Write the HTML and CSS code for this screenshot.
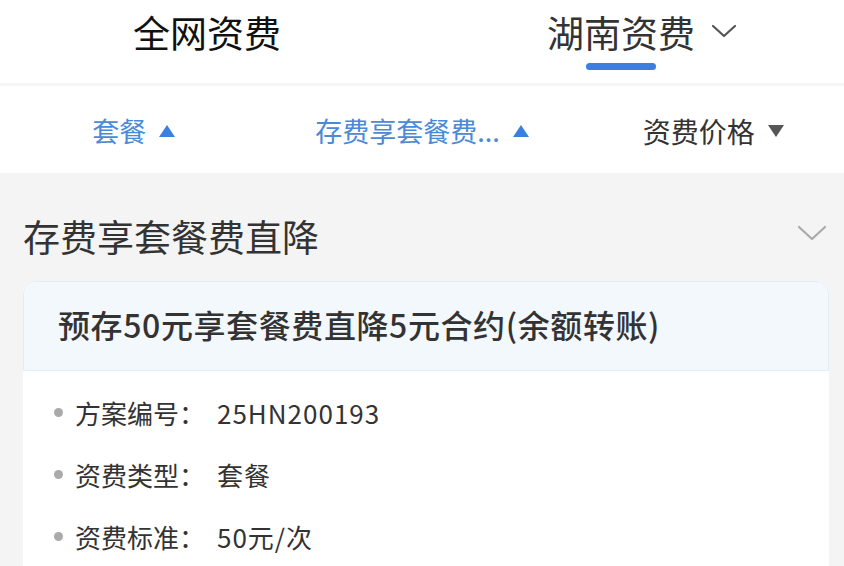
FILE: index.html
```html
<!DOCTYPE html>
<html lang="zh-CN">
<head>
    <meta charset="UTF-8">
    <meta name="viewport" content="width=device-width, initial-scale=1.0">
    <title>资费公示</title>
    <link rel="stylesheet" href="styles.css">
</head>
<body>
    <!-- 顶部切换：全网 / 湖南 -->
    <div class="tabs">
        <div class="tab">
            <span class="tab-label">全网资费</span>
        </div>
        <div class="tab tab-active">
            <span class="tab-label">
                湖南资费
                <svg class="tab-arrow" viewBox="0 0 26 16" width="26" height="16">
                    <polyline points="2,3 13,13 24,3" fill="none" stroke="#555" stroke-width="2.2" stroke-linecap="round" stroke-linejoin="round"/>
                </svg>
            </span>
            <span class="tab-line"></span>
        </div>
    </div>

    <!-- 筛选条 -->
    <div class="filters">
        <div class="filter filter-on">套餐<i class="tri tri-up"></i></div>
        <div class="filter filter-on">存费享套餐费...<i class="tri tri-up"></i></div>
        <div class="filter">资费价格<i class="tri tri-down"></i></div>
    </div>

    <div class="content">
        <div class="group-head">
            <h2>存费享套餐费直降</h2>
            <svg class="group-arrow" viewBox="0 0 30 18" width="30" height="18">
                <polyline points="2,3 15,15 28,3" fill="none" stroke="#aaa" stroke-width="2.2" stroke-linecap="round" stroke-linejoin="round"/>
            </svg>
        </div>

        <div class="card">
            <div class="card-title">预存50元享套餐费直降5元合约(余额转账)</div>
            <ul class="card-body">
                <li><span class="key">方案编号：</span>25HN200193</li>
                <li><span class="key">资费类型：</span>套餐</li>
                <li><span class="key">资费标准：</span>50元/次</li>
            </ul>
        </div>
    </div>
</body>
</html>
```

FILE: styles.css
```css
body {
    font-family: "Noto Sans CJK SC", "Noto Sans", sans-serif;
    margin: 0;
    padding: 0;
    background-color: #f4f4f4;
    color: #333;
    overflow: hidden;
}

.tabs {
    display: grid;
    grid-template-columns: 1fr 1fr;
    background: #fff;
    height: 83px;
    border-bottom: 3px solid #f6f6f6;
}

.tab {
    display: flex;
    flex-direction: column;
    align-items: center;
    padding-top: 9px;
    padding-right: 8px;
}

.tab-active {
    padding-right: 24px;
}

.tab-label {
    position: relative;
    font-size: 37px;
    line-height: 46px;
    color: #111;
}

.tab-active .tab-label {
    color: #333;
}

.tab-arrow {
    position: absolute;
    left: 100%;
    top: 14px;
    margin-left: 16px;
}

.tab-line {
    width: 70px;
    height: 7px;
    margin-top: 8px;
    border-radius: 4px;
    background: #3b7fe0;
}

.filters {
    display: grid;
    grid-template-columns: 1fr 1fr 1fr;
    height: 87px;
    background: #fff;
    align-items: center;
}

.filter {
    display: flex;
    align-items: center;
    justify-content: center;
    gap: 13px;
    font-size: 27px;
    color: #333;
    padding-top: 2px;
}

.filter:first-child {
    padding-right: 14px;
}

.filter:last-child {
    padding-left: 20px;
    font-size: 28px;
}

.filter-on {
    color: #4a8ad6;
}

.tri {
    width: 0;
    height: 0;
    border-left: 8px solid transparent;
    border-right: 8px solid transparent;
}

.tri-up {
    border-bottom: 12px solid #3b7fe0;
}

.tri-down {
    border-top: 12px solid #555;
}

.content {
    padding: 0 15px 0 23px;
}

.group-head {
    display: flex;
    align-items: center;
    justify-content: space-between;
    padding: 38px 2px 20px 0;
}

.group-head h2 {
    margin: 0;
    font-size: 37px;
    font-weight: normal;
    line-height: 50px;
    color: #333;
}

.group-arrow {
    margin-top: -6px;
}

.card {
    background: #fff;
    border-radius: 12px;
    overflow: hidden;
}

.card-title {
    background: #f3f8fd;
    border: 1px solid #e1edf8;
    border-radius: 12px 12px 0 0;
    padding: 18px 34px 22px;
    font-size: 32px;
    font-weight: 500;
    letter-spacing: 0.6px;
    line-height: 48px;
    color: #333;
}

.card-body {
    list-style: none;
    margin: 0;
    padding: 10px 0 24px 31px;
}

.card-body li {
    display: flex;
    align-items: center;
    height: 62px;
    font-size: 26px;
    letter-spacing: 1px;
    color: #333;
}

.card-body li::before {
    content: "";
    width: 9px;
    height: 9px;
    border-radius: 50%;
    background: #aaa;
    margin-right: 12px;
}

.key {
    width: 142px;
    letter-spacing: 0;
}
```
